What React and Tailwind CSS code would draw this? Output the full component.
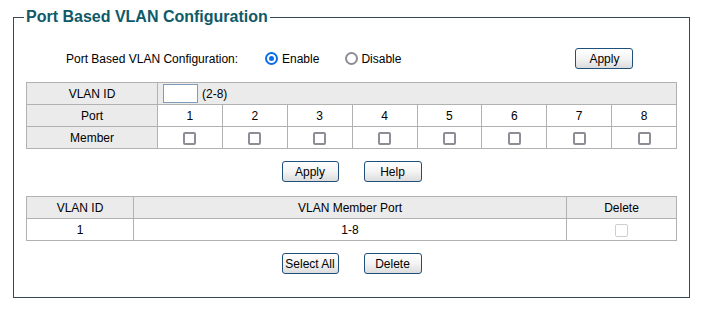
import React from "react";

const font = { fontFamily: '"Liberation Sans", Arial, sans-serif' };

function Btn({ children, className = "" }) {
  return (
    <button
      className={`h-[21px] rounded-[3px] border border-[#1f4f7a] bg-gradient-to-b from-white via-[#f4f4f4] to-[#dcdcdc] text-[12px] text-black leading-none ${className}`}
    >
      {children}
    </button>
  );
}

function Box({ disabled }) {
  return (
    <span
      className={`inline-block h-[13px] w-[13px] rounded-[2px] align-middle ${
        disabled ? "border border-[#cfcfcf]" : "border-2 border-[#8e8c96]"
      }`}
    />
  );
}

function Radio({ checked }) {
  return checked ? (
    <span className="inline-flex h-[13px] w-[13px] items-center justify-center rounded-full border-2 border-[#0a6ee8]">
      <span className="h-[5px] w-[5px] rounded-full bg-[#0a6ee8]" />
    </span>
  ) : (
    <span className="inline-block h-[13px] w-[13px] rounded-full border-2 border-[#8e8c96]" />
  );
}

export default function App() {
  const ports = [1, 2, 3, 4, 5, 6, 7, 8];
  return (
    <div className="h-[311px] w-[702px] bg-white pl-[13px] pt-[7px] text-black" style={font}>
      <fieldset className="h-[291px] w-[676px] border border-[#34495a] px-[12px]">
        <legend className="-ml-[2px] px-[2px] text-[16px] font-bold leading-[20px] text-[#0e5a68]">
          Port Based VLAN Configuration
        </legend>

        <div className="mt-[21px] flex h-[21px] items-center text-[12px]">
          <span className="ml-[40px] w-[199px]">Port Based VLAN Configuration:</span>
          <label className="flex items-center gap-[4px]">
            <Radio checked />
            <span>Enable</span>
          </label>
          <label className="ml-[26px] flex items-center gap-[3px]">
            <Radio />
            <span>Disable</span>
          </label>
          <Btn className="ml-[174px] w-[58px]">Apply</Btn>
        </div>

        <table className="mt-[13px] w-[651px] table-fixed border-collapse text-[12px]">
          <colgroup>
            <col className="w-[131px]" />
            {ports.map((p) => (
              <col key={p} />
            ))}
          </colgroup>
          <tbody>
            <tr className="h-[22px] bg-[#ebebeb]">
              <td className="border border-[#b1b1b1] text-center">VLAN ID</td>
              <td colSpan={8} className="border border-[#b1b1b1] px-[5px]">
                <div className="flex items-center gap-[4px]">
                  <span className="inline-block h-[19px] w-[35px] border border-[#7f9db9] bg-white" />
                  <span>(2-8)</span>
                </div>
              </td>
            </tr>
            <tr className="h-[22px]">
              <td className="border border-[#b1b1b1] bg-[#ebebeb] text-center">Port</td>
              {ports.map((p) => (
                <td key={p} className="border border-[#b1b1b1] text-center">
                  {p}
                </td>
              ))}
            </tr>
            <tr className="h-[22px]">
              <td className="border border-[#b1b1b1] bg-[#ebebeb] text-center">Member</td>
              {ports.map((p) => (
                <td key={p} className="border border-[#b1b1b1] text-center">
                  <Box />
                </td>
              ))}
            </tr>
          </tbody>
        </table>

        <div className="mt-[12px] flex justify-center gap-[25px]">
          <Btn className="w-[57px]">Apply</Btn>
          <Btn className="w-[58px]">Help</Btn>
        </div>

        <table className="mt-[14px] w-[651px] table-fixed border-collapse text-[12px]">
          <colgroup>
            <col className="w-[107px]" />
            <col />
            <col className="w-[110px]" />
          </colgroup>
          <tbody>
            <tr className="h-[22px] bg-[#ebebeb]">
              <td className="border border-[#b1b1b1] text-center">VLAN ID</td>
              <td className="border border-[#b1b1b1] text-center">VLAN Member Port</td>
              <td className="border border-[#b1b1b1] text-center">Delete</td>
            </tr>
            <tr className="h-[22px]">
              <td className="border border-[#b1b1b1] text-center">1</td>
              <td className="border border-[#b1b1b1] text-center">1-8</td>
              <td className="border border-[#b1b1b1] text-center">
                <Box disabled />
              </td>
            </tr>
          </tbody>
        </table>

        <div className="mt-[12px] flex justify-center gap-[25px]">
          <Btn className="w-[57px]">Select All</Btn>
          <Btn className="w-[58px]">Delete</Btn>
        </div>
      </fieldset>
    </div>
  );
}
